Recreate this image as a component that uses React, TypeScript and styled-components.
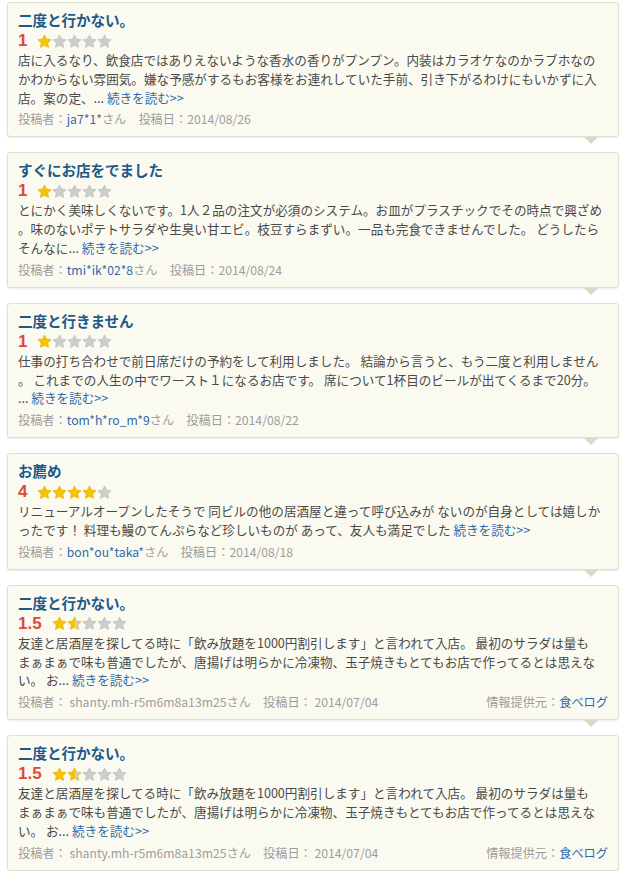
import React from "react";
import styled, { createGlobalStyle } from "styled-components";

const GlobalStyle = createGlobalStyle`
  html, body { margin: 0; padding: 0; background: #ffffff; }
  body { font-family: "Noto Sans CJK JP", "Noto Sans", sans-serif; }
`;

const Page = styled.div`
  width: 625px;
  padding: 2px 6px 0 7px;
  box-sizing: border-box;
  display: flex;
  flex-direction: column;
  gap: 15px;
`;

const Card = styled.div`
  position: relative;
  background: #fbfaf1;
  border: 1px solid #e2dfd1;
  border-radius: 3px;
  box-shadow: 0 1px 2px rgba(0, 0, 0, 0.08);
  padding: 6px 10px 7px 10px;
  display: flex;
  flex-direction: column;
`;

const Pointer = styled.div`
  position: absolute;
  right: 20px;
  bottom: -8px;
  width: 0;
  height: 0;
  border-left: 7px solid transparent;
  border-right: 7px solid transparent;
  border-top: 7px solid #dcd9c8;
`;

const Title = styled.div`
  font-size: 14.6px;
  font-weight: 700;
  line-height: 22px;
  color: #1b5a8b;
  letter-spacing: -0.1px;
`;

const RatingRow = styled.div`
  display: flex;
  align-items: center;
  height: 20px;
  gap: 10px;
`;

const Score = styled.span`
  font-family: "Liberation Sans", "Noto Sans", sans-serif;
  font-size: 17px;
  font-weight: 700;
  color: #dc4a3c;
  line-height: 20px;
`;

const Stars = styled.span`
  display: flex;
  gap: 0px;
  align-items: center;
`;

const Body = styled.div`
  font-size: 12.6px;
  line-height: 18.8px;
  color: #4a4a4a;
  white-space: nowrap;
`;

const More = styled.a`
  color: #2f6aa8;
  text-decoration: none;
`;

const Footer = styled.div`
  display: flex;
  justify-content: space-between;
  margin-top: 2px;
  font-size: 12.2px;
  line-height: 20px;
  color: #9d9d9d;
`;

const User = styled.span<{ $plain?: boolean }>`
  color: ${(p) => (p.$plain ? "#9d9d9d" : "#2f6aa8")};
`;

const Source = styled.span`
  color: #9d9d9d;
`;

const SourceLink = styled.span`
  color: #2f6aa8;
`;

const STAR = "M12 1.5l3.2 6.6 7.3 1-5.3 5.1 1.3 7.2L12 18l-6.5 3.4 1.3-7.2L1.5 9.1l7.3-1z";

let gid = 0;
const Star: React.FC<{ fill: number }> = ({ fill }) => {
  const id = React.useMemo(() => `sg${gid++}`, []);
  return (
    <svg width="15" height="15" viewBox="0 0 24 24">
      <defs>
        <linearGradient id={id} x1="0" x2="1" y1="0" y2="0">
          <stop offset={fill} stopColor="#f6c400" />
          <stop offset={fill} stopColor="#cdcdcd" />
        </linearGradient>
      </defs>
      <path d={STAR} fill={`url(#${id})`} stroke={fill > 0 ? "#e3aa00" : "#bcbcbc"} strokeWidth="1" strokeLinejoin="round" />
    </svg>
  );
};

const StarRow: React.FC<{ value: number }> = ({ value }) => (
  <Stars>
    {[0, 1, 2, 3, 4].map((i) => (
      <Star key={i} fill={Math.max(0, Math.min(1, value - i))} />
    ))}
  </Stars>
);

type Review = {
  title: string;
  score: string;
  value: number;
  lines: string[];
  user: string;
  date: string;
  tabelog?: boolean;
};

const reviews: Review[] = [
  {
    title: "二度と行かない。",
    score: "1",
    value: 1,
    lines: [
      "店に入るなり、飲食店ではありえないような香水の香りがプンプン。内装はカラオケなのかラブホなの",
      "かわからない雰囲気。嫌な予感がするもお客様をお連れしていた手前、引き下がるわけにもいかずに入",
      "店。案の定、... ",
    ],
    user: "ja7*1*",
    date: "2014/08/26",
  },
  {
    title: "すぐにお店をでました",
    score: "1",
    value: 1,
    lines: [
      "とにかく美味しくないです。1人２品の注文が必須のシステム。お皿がプラスチックでその時点で興ざめ",
      "。味のないポテトサラダや生臭い甘エビ。枝豆すらまずい。一品も完食できませんでした。 どうしたら",
      "そんなに... ",
    ],
    user: "tmi*ik*02*8",
    date: "2014/08/24",
  },
  {
    title: "二度と行きません",
    score: "1",
    value: 1,
    lines: [
      "仕事の打ち合わせで前日席だけの予約をして利用しました。 結論から言うと、もう二度と利用しません",
      "。 これまでの人生の中でワースト１になるお店です。 席について1杯目のビールが出てくるまで20分。",
      "... ",
    ],
    user: "tom*h*ro_m*9",
    date: "2014/08/22",
  },
  {
    title: "お薦め",
    score: "4",
    value: 4,
    lines: [
      "リニューアルオープンしたそうで 同ビルの他の居酒屋と違って呼び込みが ないのが自身としては嬉しか",
      "ったです！ 料理も鰻のてんぷらなど珍しいものが あって、友人も満足でした ",
    ],
    user: "bon*ou*taka*",
    date: "2014/08/18",
  },
  {
    title: "二度と行かない。",
    score: "1.5",
    value: 1.5,
    lines: [
      "友達と居酒屋を探してる時に「飲み放題を1000円割引します」と言われて入店。 最初のサラダは量も",
      "まぁまぁで味も普通でしたが、唐揚げは明らかに冷凍物、玉子焼きもとてもお店で作ってるとは思えな",
      "い。 お... ",
    ],
    user: "shanty.mh-r5m6m8a13m25",
    date: "2014/07/04",
    tabelog: true,
  },
  {
    title: "二度と行かない。",
    score: "1.5",
    value: 1.5,
    lines: [
      "友達と居酒屋を探してる時に「飲み放題を1000円割引します」と言われて入店。 最初のサラダは量も",
      "まぁまぁで味も普通でしたが、唐揚げは明らかに冷凍物、玉子焼きもとてもお店で作ってるとは思えな",
      "い。 お... ",
    ],
    user: "shanty.mh-r5m6m8a13m25",
    date: "2014/07/04",
    tabelog: true,
  },
];

const ReviewCard: React.FC<{ r: Review }> = ({ r }) => (
  <Card>
    <Title>{r.title}</Title>
    <RatingRow>
      <Score>{r.score}</Score>
      <StarRow value={r.value} />
    </RatingRow>
    <Body>
      {r.lines.map((l, i) => (
        <React.Fragment key={i}>
          {l}
          {i < r.lines.length - 1 ? <br /> : <More href="#">続きを読む&gt;&gt;</More>}
        </React.Fragment>
      ))}
    </Body>
    <Footer>
      {r.tabelog ? (
        <span>
          投稿者： <User $plain>{r.user}</User>さん　投稿日： {r.date}
        </span>
      ) : (
        <span>
          投稿者：<User>{r.user}</User>さん　投稿日：{r.date}
        </span>
      )}
      {r.tabelog && (
        <Source>
          情報提供元：<SourceLink>食べログ</SourceLink>
        </Source>
      )}
    </Footer>
    <Pointer />
  </Card>
);

export default function App() {
  return (
    <>
      <GlobalStyle />
      <Page>
        {reviews.map((r, i) => (
          <ReviewCard key={i} r={r} />
        ))}
      </Page>
    </>
  );
}
